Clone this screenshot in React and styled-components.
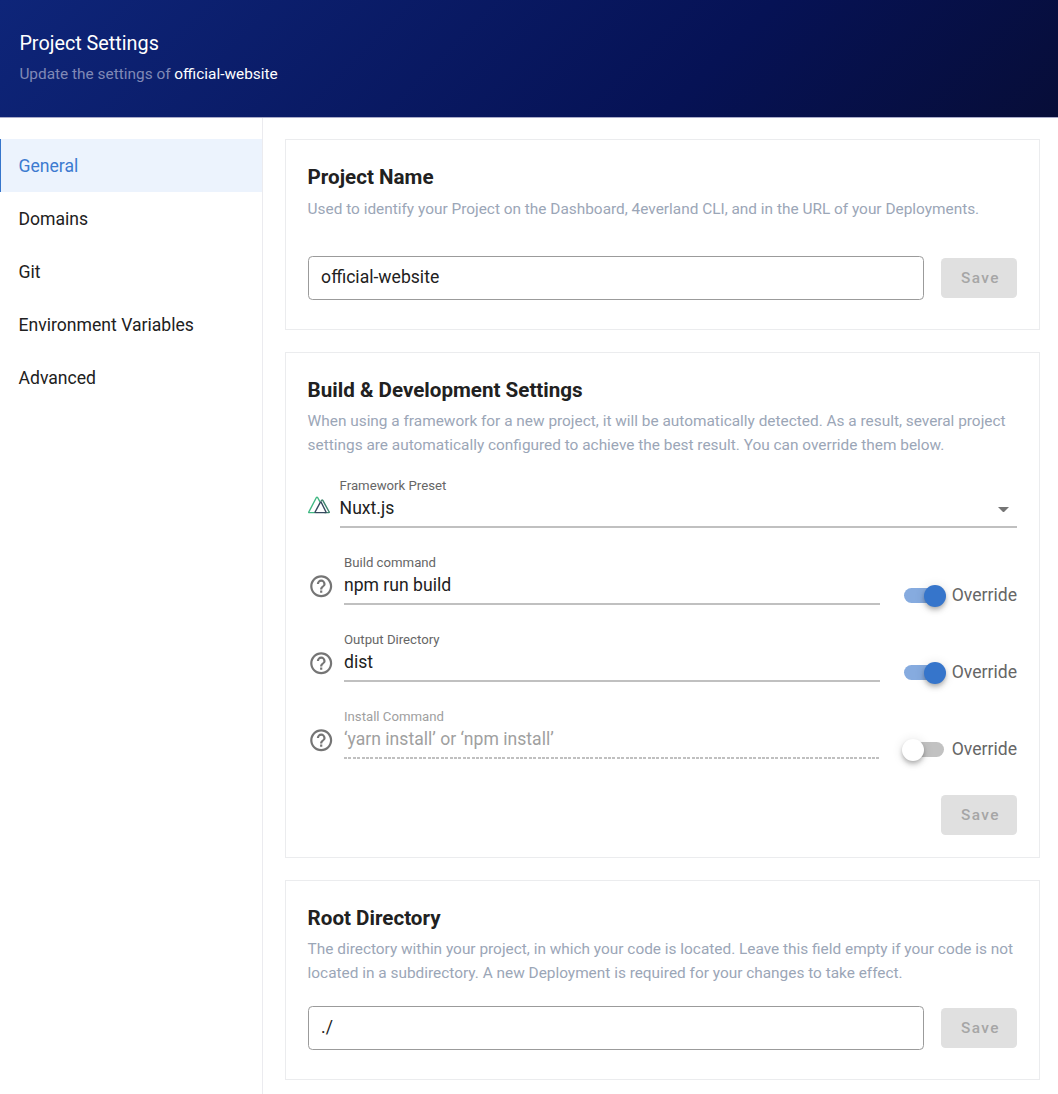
import React from "react";
import styled, { createGlobalStyle, css } from "styled-components";

const Global = createGlobalStyle`
  * { box-sizing: border-box; }
  body { margin: 0; background: #fff; font-family: Roboto, "Liberation Sans", sans-serif; color: #212121; }
  h1, h2, p { margin: 0; }
`;

const Page = styled.div`
  height: 1094px;
  overflow: hidden;
  display: flex;
  flex-direction: column;
`;

const Header = styled.header`
  height: 118px;
  flex: none;
  padding: 31px 19.4px 0;
  border-bottom: 1px solid #a9abc9;
  background: linear-gradient(135deg, #0e2579 0%, #061255 66%, #070d38 100%) padding-box;
`;

const HeaderTitle = styled.h1`
  font-size: 19.8px;
  font-weight: 400;
  line-height: 26px;
  color: #fff;
`;

const HeaderText = styled.p`
  margin-top: 6px;
  font-size: 15.4px;
  line-height: 23px;
  color: #8089b6;
`;

const ProjectLabel = styled.span`
  color: #fff;
`;

const Body = styled.div`
  flex: 1;
  display: flex;
  min-height: 0;
`;

const Sidebar = styled.nav`
  width: 262.6px;
  flex: none;
  padding-top: 21px;
  border-right: 1px solid #ebebef;
`;

const NavItem = styled.a`
  display: flex;
  align-items: center;
  height: 53px;
  padding: 0.6px 0 0 17.5px;
  border-left: 1px solid ${(p) => (p.$active ? "#3675cb" : "transparent")};
  background: ${(p) => (p.$active ? "#ecf3fd" : "transparent")};
  color: ${(p) => (p.$active ? "#3c7bd0" : "#212121")};
  font-size: 17.6px;
`;

const Main = styled.main`
  flex: 1;
  padding: 21px 18px 0 22px;
  display: flex;
  flex-direction: column;
  gap: 22px;
`;

const Card = styled.section`
  flex: none;
  height: ${(p) => p.$height}px;
  padding: 22px;
  border: 1px solid #ebecee;
  display: flex;
  flex-direction: column;
`;

const CardTitle = styled.h2`
  margin-top: 1px;
  font-size: 20.6px;
  font-weight: 700;
  line-height: 28px;
`;

const CardText = styled.p`
  margin-top: ${(p) => p.$top}px;
  font-size: 15.4px;
  line-height: 24px;
  color: #9ba6b7;
`;

const InputRow = styled.div`
  display: flex;
  align-items: center;
  gap: 17.2px;
  margin-top: ${(p) => p.$top}px;
`;

const TextInput = styled.div`
  flex: 1;
  height: 44px;
  padding: 0 12.5px 1.4px;
  display: flex;
  align-items: center;
  border: 1px solid #9b9b9b;
  border-radius: 4.4px;
  font-size: 17.6px;
`;

const SaveButton = styled.button`
  width: 76px;
  height: 39.6px;
  padding: 0 0 0 3px;
  border: 0;
  border-radius: 4.4px;
  background: #e0e0e0;
  color: #a6a6a6;
  font: 500 15.4px Roboto, "Liberation Sans", sans-serif;
  letter-spacing: 1.375px;
`;

const Fields = styled.div`
  display: flex;
  flex-direction: column;
  margin-top: 17px;
`;

const FieldRow = styled.div`
  display: flex;
  height: 77px;
`;

const IconSlot = styled.div`
  width: ${(p) => p.$width}px;
  flex: none;
  padding: ${(p) => p.$pad};
  svg { display: block; }
`;

const Field = styled.div`
  flex: 1;
  height: 54px;
  display: flex;
  flex-direction: column;
  padding-top: 2px;
  ${(p) =>
    p.$disabled
      ? css`
          color: #a0a0a0;
          background: repeating-linear-gradient(90deg, #c0c0c0 0 3px, transparent 3px 4.4px) bottom / 100% 2px no-repeat;
        `
      : css`
          background: linear-gradient(#c0c0c0, #c0c0c0) bottom / 100% 2px no-repeat;
        `}
`;

const FieldLabel = styled.span`
  font-size: 13.2px;
  line-height: 19px;
  color: ${(p) => (p.$disabled ? "#a0a0a0" : "#666")};
`;

const FieldValue = styled.span`
  display: flex;
  align-items: center;
  justify-content: space-between;
  padding-right: 8px;
  font-size: 17.6px;
  line-height: 26px;
  svg { margin-top: 4px; }
`;

const Override = styled.div`
  display: flex;
  align-items: center;
  width: 137px;
  height: 26px;
  margin-top: 31.5px;
  padding-left: 24.4px;
  color: #666;
  font-size: 17.6px;
`;

const Track = styled.div`
  width: 40px;
  height: 15.4px;
  margin: 0.9px 8px 0 0;
  border-radius: 8px;
  background: ${(p) => (p.$on ? "#86abdf" : "#c2c2c2")};
  display: flex;
  align-items: center;
  justify-content: ${(p) => (p.$on ? "flex-end" : "flex-start")};
`;

const Thumb = styled.div`
  width: 22px;
  height: 22px;
  flex: none;
  margin: 0 -2.2px;
  border-radius: 50%;
  background: ${(p) => (p.$on ? "#3675cb" : "#fff")};
  box-shadow: 0 2px 4px -1px rgba(0, 0, 0, 0.2), 0 4px 5px rgba(0, 0, 0, 0.14), 0 1px 11px rgba(0, 0, 0, 0.12);
`;

const Actions = styled.div`
  display: flex;
  justify-content: flex-end;
  margin-top: 13.5px;
`;

const HelpIcon = () => (
  <svg width="26.4" height="26.4" viewBox="0 0 24 24" fill="#757575">
    <path d="M11,18H13V16H11V18M12,2A10,10 0 0,0 2,12A10,10 0 0,0 12,22A10,10 0 0,0 22,12A10,10 0 0,0 12,2M12,20C7.59,20 4,16.41 4,12C4,7.59 7.59,4 12,4C16.41,4 20,7.59 20,12C20,16.41 16.41,20 12,20M12,6A4,4 0 0,0 8,10H10A2,2 0 0,1 12,8A2,2 0 0,1 14,10C14,12 11,11.75 11,15H13C13,12.75 16,12.5 16,10A4,4 0 0,0 12,6Z" />
  </svg>
);

const NuxtIcon = () => (
  <svg width="22" height="18" viewBox="0 0 22 18" fill="none" strokeWidth="1.4" strokeLinejoin="round">
    <path d="M7 16.6H1.1Q.5 16.6.8 16L8.4 1.5Q9 .8 9.6 1.5L12 5.8" stroke="#41b883" />
    <path d="M16.5 16.6H20.8Q21.6 16.6 21.2 16L14.8 4.4Q14.2 3.6 13.6 4.4L13 5.3" stroke="#41866f" />
    <path d="M7.5 16.6Q6.8 16.6 7.1 16L12.4 6.2Q12.8 5.6 13.2 6.2L18 16Q18.2 16.6 17.5 16.6Z" stroke="#35495e" />
  </svg>
);

const CaretIcon = () => (
  <svg width="11" height="5.5" viewBox="0 0 10 5" fill="#757575">
    <path d="M0 0L5 5L10 0Z" />
  </svg>
);

const navItems = ["General", "Domains", "Git", "Environment Variables", "Advanced"];

const commands = [
  { label: "Build command", value: "npm run build", on: true },
  { label: "Output Directory", value: "dist", on: true },
  { label: "Install Command", value: "‘yarn install’ or ‘npm install’", on: false },
];

export default function App() {
  return (
    <>
      <Global />
      <Page>
        <Header>
          <HeaderTitle>Project Settings</HeaderTitle>
          <HeaderText>
            Update the settings of <ProjectLabel>official-website</ProjectLabel>
          </HeaderText>
        </Header>
        <Body>
          <Sidebar>
            {navItems.map((item, i) => (
              <NavItem key={item} $active={i === 0}>{item}</NavItem>
            ))}
          </Sidebar>
          <Main>
            <Card $height={190.6}>
              <CardTitle>Project Name</CardTitle>
              <CardText $top={6}>
                Used to identify your Project on the Dashboard, 4everland CLI, and in the URL of your Deployments.
              </CardText>
              <InputRow $top={35}>
                <TextInput>official-website</TextInput>
                <SaveButton>Save</SaveButton>
              </InputRow>
            </Card>
            <Card $height={506}>
              <CardTitle>Build &amp; Development Settings</CardTitle>
              <CardText $top={5}>
                When using a framework for a new project, it will be automatically detected. As a result, several
                project settings are automatically configured to achieve the best result. You can override them below.
              </CardText>
              <Fields>
                <FieldRow>
                  <IconSlot $width={32} $pad="22px 0 0 0"><NuxtIcon /></IconSlot>
                  <Field>
                    <FieldLabel>Framework Preset</FieldLabel>
                    <FieldValue>Nuxt.js <CaretIcon /></FieldValue>
                  </Field>
                </FieldRow>
                {commands.map((c) => (
                  <FieldRow key={c.label}>
                    <IconSlot $width={36.4} $pad="22.5px 0 0 0"><HelpIcon /></IconSlot>
                    <Field $disabled={!c.on}>
                      <FieldLabel $disabled={!c.on}>{c.label}</FieldLabel>
                      <FieldValue>{c.value}</FieldValue>
                    </Field>
                    <Override>
                      <Track $on={c.on}><Thumb $on={c.on} /></Track>
                      Override
                    </Override>
                  </FieldRow>
                ))}
              </Fields>
              <Actions><SaveButton>Save</SaveButton></Actions>
            </Card>
            <Card $height={200}>
              <CardTitle>Root Directory</CardTitle>
              <CardText $top={5}>
                The directory within your project, in which your code is located. Leave this field empty if your code
                is not located in a subdirectory. A new Deployment is required for your changes to take effect.
              </CardText>
              <InputRow $top={21.2}>
                <TextInput>./</TextInput>
                <SaveButton>Save</SaveButton>
              </InputRow>
            </Card>
          </Main>
        </Body>
      </Page>
    </>
  );
}
